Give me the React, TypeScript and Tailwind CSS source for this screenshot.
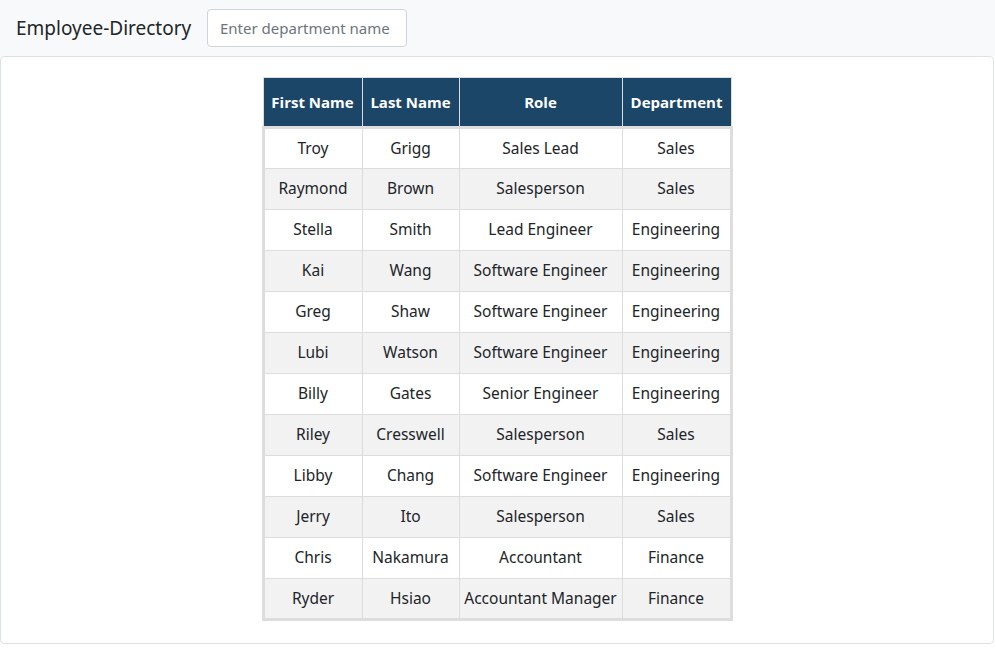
import React from 'react';

type Employee = {
  first: string;
  last: string;
  role: string;
  dept: string;
};

const employees: Employee[] = [
  { first: 'Troy', last: 'Grigg', role: 'Sales Lead', dept: 'Sales' },
  { first: 'Raymond', last: 'Brown', role: 'Salesperson', dept: 'Sales' },
  { first: 'Stella', last: 'Smith', role: 'Lead Engineer', dept: 'Engineering' },
  { first: 'Kai', last: 'Wang', role: 'Software Engineer', dept: 'Engineering' },
  { first: 'Greg', last: 'Shaw', role: 'Software Engineer', dept: 'Engineering' },
  { first: 'Lubi', last: 'Watson', role: 'Software Engineer', dept: 'Engineering' },
  { first: 'Billy', last: 'Gates', role: 'Senior Engineer', dept: 'Engineering' },
  { first: 'Riley', last: 'Cresswell', role: 'Salesperson', dept: 'Sales' },
  { first: 'Libby', last: 'Chang', role: 'Software Engineer', dept: 'Engineering' },
  { first: 'Jerry', last: 'Ito', role: 'Salesperson', dept: 'Sales' },
  { first: 'Chris', last: 'Nakamura', role: 'Accountant', dept: 'Finance' },
  { first: 'Ryder', last: 'Hsiao', role: 'Accountant Manager', dept: 'Finance' },
];

const headers = ['First Name', 'Last Name', 'Role', 'Department'];

function Navbar() {
  return (
    <nav className='flex h-14 items-center bg-[#f8f9fa] px-4'>
      <span className="mr-4 w-[175px] whitespace-nowrap text-[19px] text-[#212529] [font-family:'Noto_Sans',sans-serif]">
        Employee-Directory
      </span>
      <input
        type='text'
        placeholder='Enter department name'
        className="h-[38px] w-[200px] rounded border border-[#ced4da] bg-white px-3 text-[15px] text-[#495057] outline-none placeholder:text-[#6c757d] [font-family:'Noto_Sans',sans-serif]"
      />
    </nav>
  );
}

function App() {
  return (
    <div className='min-h-[653px] bg-white'>
      <Navbar />

      <div className='mr-[1px] h-[588px] rounded border border-[#dee2e6] bg-white px-5 pt-5'>
        <table className="mx-auto table-fixed border-collapse border border-[#dddddd] text-center [font-family:'Open_Sans',sans-serif]">
          <colgroup>
            <col className='w-[99px]' />
            <col className='w-[97px]' />
            <col className='w-[163px]' />
            <col className='w-[109px]' />
          </colgroup>
          <thead>
            <tr className='h-[50px] bg-[#1b4668]'>
              {headers.map((h) => (
                <th
                  key={h}
                  className='border border-[#dddddd] px-1 text-[15px] font-bold text-white'
                >
                  {h}
                </th>
              ))}
            </tr>
          </thead>
          <tbody className='border-[3px] border-[#dddddd]'>
            {employees.map((e, i) => (
              <tr
                key={e.first}
                className={i % 2 === 0 ? 'h-[41px] bg-white' : 'h-[41px] bg-[#f2f2f2]'}
              >
                {[e.first, e.last, e.role, e.dept].map((v, j) => (
                  <td
                    key={j}
                    className="border border-[#dddddd] px-1 text-[15.5px] text-[#212529] [font-family:'Noto_Sans',sans-serif]"
                  >
                    {v}
                  </td>
                ))}
              </tr>
            ))}
          </tbody>
        </table>
      </div>
    </div>
  );
}

export default App;
